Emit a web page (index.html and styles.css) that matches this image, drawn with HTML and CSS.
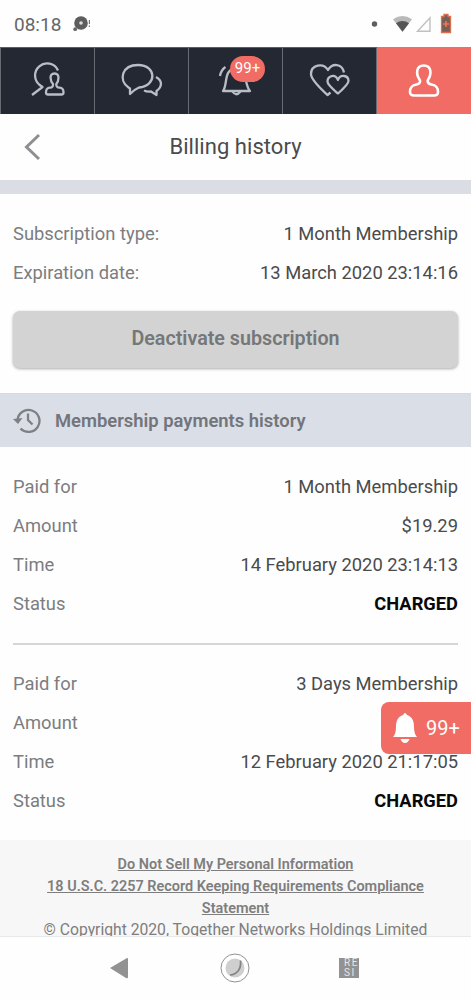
FILE: index.html
```html
<!DOCTYPE html>
<html lang="en">
<head>
<meta charset="utf-8">
<title>Billing history</title>
<link rel="stylesheet" href="styles.css">
</head>
<body>
<div class="screen">
  <header class="status">
    <span class="clock">08:18</span>
    <svg class="status-app" width="18" height="16" viewBox="0 0 18 16"><circle cx="8" cy="7" r="6.8" fill="#5d5d5d"/><circle cx="8" cy="7" r="1.800" fill="#ddd"/><circle cx="2.200" cy="13.200" r="1.900" fill="#666"/><path d="M16.400 4v4M16.400 9.500v1.500" stroke="#777" stroke-width="1.200"/></svg>
    <div class="status-right">
      <svg width="94" height="22" viewBox="0 0 94 22"><circle cx="4.500" cy="11" r="2.700" fill="#5d5d5d"/><path d="M23 6.200Q32.500-.300 42 6.200L32.500 18.800Z" fill="#b9b9b9"/><path d="M26 10.200Q32.500 6 39 10.200L32.500 18.800Z" fill="#555"/><path d="M47.500 18.200H60V4.800Z" fill="none" stroke="#c0c0c0" stroke-width="1.400"/><path d="M71.500 3.500h2.500V1.500h4v2h2.500v16H71.500Z" fill="#746058" stroke="#e06d50" stroke-width="1.300"/><path d="M76 8v6M73 11h6" stroke="#f17552" stroke-width="1.700"/></svg>
    </div>
  </header>
  <nav class="tabs">
    <a class="tab"><svg width="36" height="34" viewBox="0 0 36 34"><path d="M28 7.500A12 12 0 1 0 10.500 22.500M9 21.500L12.500 24L2 32"/><path d="M23 21C20.500 18.500 18.500 10.500 24.500 10.500S28.500 18.500 26.300 21C26 23.500 27.500 24.500 29.500 24.700C32.500 25 33.500 26 33.500 29.500Q33.500 31.500 31.500 31.500H18Q16 31.500 16 29.500C16 26 17 25 20 24.700C22 24.500 23.300 23.500 23 21Z"/></svg></a>
    <a class="tab"><svg width="42" height="34" viewBox="0 0 42 34"><path d="M7.500 24.500C-3 17 1 2 17 2C36 2 36 23 18 24.500C15.500 25.500 13 27 9 31V25.500Z"/><path d="M35 14C42 18 41 24 35.500 28V32L30 28.500C27 29 25 28.500 23 27.500"/></svg></a>
    <a class="tab"><svg width="38" height="36" viewBox="0 0 38 36"><path d="M8.500 5Q4 8 3 14"/><path d="M6 29C11 23 6 7 19 6.500C31 7 27 23 33 29Z"/><path d="M15.500 29.500Q19 35 23.500 29.500"/></svg><span class="badge">99+</span></a>
    <a class="tab"><svg width="42" height="34" viewBox="0 0 42 34"><path d="M35 9.500C33 0 23 0 19 7C14-1 2 2 2 11C2 17 12 26 18.500 32L21.500 29.500"/><path d="M29 17C26 10 18.500 13 18.500 18.500C18.500 22 25 27 29 30.500C34 26 39.500 21 39.500 18C39.500 12 31 11 29 17Z"/></svg></a>
    <a class="tab active"><svg width="36" height="36" viewBox="0 0 36 36"><path d="M14 18.500C9.500 12 10 3.500 17.800 3.500S26 12 21.700 18.500C21.500 21 23 22 25.500 22.500C31 23.500 32 26 32 30Q32 33.500 28 33.500H8Q4 33.500 4 30C4 26 5 23.500 10.500 22.500C13 22 14.500 21 14 18.500Z"/></svg></a>
  </nav>
  <div class="title-bar">
    <svg width="20" height="30" viewBox="0 0 20 30"><path d="M17 3L4.500 15L17 27"/></svg>
    <h1>Billing history</h1>
  </div>
  <div class="divider-band"></div>
  <main>
    <section class="rows subscription">
      <div class="row"><span>Subscription type:</span><b>1 Month Membership</b></div>
      <div class="row"><span>Expiration date:</span><b>13 March 2020 23:14:16</b></div>
    </section>
    <button class="deactivate">Deactivate subscription</button>
    <h2><svg width="28" height="28" viewBox="0 0 28 28"><path d="M4.500 13A11 11 0 1 1 7.500 21.500"/><path class="arrow" d="M0 12L9.500 11L5 17Z"/><path d="M15 6.500V13L19.500 17.500"/></svg><span>Membership payments history</span></h2>
    <section class="rows payment">
      <div class="row"><span>Paid for</span><b>1 Month Membership</b></div>
      <div class="row"><span>Amount</span><b>$19.29</b></div>
      <div class="row"><span>Time</span><b>14 February 2020 23:14:13</b></div>
      <div class="row"><span>Status</span><b class="charged">CHARGED</b></div>
    </section>
    <section class="rows payment second">
      <div class="row"><span>Paid for</span><b>3 Days Membership</b></div>
      <div class="row"><span>Amount</span></div>
      <div class="row"><span>Time</span><b>12 February 2020 21:17:05</b></div>
      <div class="row"><span>Status</span><b class="charged">CHARGED</b></div>
    </section>
    <div class="alert"><svg width="26" height="32" viewBox="0 0 26 32"><path d="M1 25Q4 22 4 15C4 8 6 5 11 3Q13-1 15 3C20 5 22 8 22 15Q22 22 25 25ZM8.500 27H17.500Q16 31 13 31T8.500 27Z"/></svg><span>99+</span></div>
  </main>
  <footer>
    <a>Do Not Sell My Personal Information</a>
    <a>18 U.S.C. 2257 Record Keeping Requirements Compliance Statement</a>
    <p>© Copyright 2020, Together Networks Holdings Limited</p>
  </footer>
  <div class="system-nav">
    <svg width="20" height="22" viewBox="0 0 20 22"><path d="M1 11L18 1Q19 .5 19 2V20Q19 22 17 21Z" fill="#929292"/></svg>
    <svg class="home" width="30" height="30" viewBox="0 0 30 30"><circle cx="15" cy="15" r="14" fill="#fff" stroke="#929292"/><circle cx="15" cy="15" r="9.500" fill="#cfcfcf"/><path d="M20.500 7.500C21.500 16 17 21.500 10 22" fill="none" stroke="#858585" stroke-width="1.700"/></svg>
    <div class="recent"><span>RE</span><span>SI</span></div>
  </div>
</div>
</body>
</html>
```
FILE: styles.css
```css
* { box-sizing: border-box; }
body { margin: 0; font-family: Roboto, sans-serif; color: #4a4b4c; background: #fefefe; }
h1, h2, p { margin: 0; }
.screen { width: 471px; height: 1000px; overflow: hidden; display: flex; flex-direction: column; }
.status { height: 47px; flex: none; display: flex; align-items: center; padding: 0 14px; }
.clock { font-size: 19px; color: #666; width: 59px; padding-top: 2px; }
.status-right { margin-left: auto; height: 22px; }
.status-right svg { display: block; margin-right: -7px; }
.tabs { height: 67px; flex: none; display: grid; grid-template-columns: 95px 94px 94px 94px 94px; background: #242832; }
.tab { position: relative; display: flex; align-items: center; justify-content: center; border-right: 1px solid #686b72; border-top: 1px solid #5a5d63; padding-bottom: 2px; }
.tab svg { fill: none; stroke: #b9bdc6; stroke-width: 2.3; stroke-linejoin: round; overflow: visible; }
.tab:first-child { border-left: 1px solid #686b72; }
.tab.active { background: #f16c65; border: 0; }
.tab.active svg { stroke: #fff; stroke-width: 2.6; }
.badge { position: absolute; left: 41px; top: 8px; width: 35px; height: 26px; border-radius: 13px; background: #f16c65; color: #fff; font-size: 15px; line-height: 25px; text-align: center; }
.title-bar { height: 66px; flex: none; display: grid; grid-template-columns: 20px 1fr 20px; align-items: center; padding: 0 22px; }
.title-bar svg { fill: none; stroke: #8d8f93; stroke-width: 3; }
h1 { text-align: center; font-size: 22px; font-weight: 400; padding-bottom: 2px; letter-spacing: .05px; }
.divider-band { height: 14px; flex: none; background: #dadde4; }
main { position: relative; flex: none; height: 646px; }
.rows { padding: 0 13px; font-size: 18.35px; }
.row { height: 39px; display: flex; align-items: center; justify-content: space-between; }
.row span { color: #7b7d7f; }
.row b { font-weight: 400; }
.row .charged { color: #090909; font-weight: 700; font-size: 18.3px; }
.subscription { padding-top: 20px; }
.deactivate { display: block; width: 445px; height: 57px; margin: 19px 13px 25px; padding: 0 0 3px; background: #d3d3d3; color: #757779; border: 0; border-radius: 7px; box-shadow: 0 1px 3px #aaa; font: 600 19.7px Roboto, sans-serif; }
h2 { height: 54px; display: flex; align-items: center; padding: 0 13px; gap: 14px; background: #dadee6; color: #72757c; font-size: 18.4px; font-weight: 600; border-top: 1px solid #d7dadd; }
h2 svg { fill: none; stroke: #7d8085; stroke-width: 2.3; }
h2 .arrow { fill: #7d8085; stroke: none; }
.payment { padding-top: 20px; }
.payment.second { margin: 20px 13px 0; padding: 19px 0 0; border-top: 2px solid #d4d5d6; }
.alert { position: absolute; left: 381px; top: 508px; width: 90px; height: 52px; border-radius: 8px 0 0 8px; background: #f16c65; color: #fff; display: flex; align-items: center; padding-left: 11px; gap: 8px; font-size: 20px; }
.alert svg { fill: #fff; }
footer { height: 97px; flex: none; overflow: hidden; background: #f7f7f7; border-bottom: 1px solid #e9e9e9; color: #7e7e7e; padding: 14px 40px 0; text-align: center; font-size: 14.45px; line-height: 22px; }
footer a { display: block; font-weight: 600; text-decoration: underline; }
footer p { font-size: 15.7px; white-space: nowrap; margin-top: -1px; }
.system-nav { height: 63px; flex: none; display: flex; align-items: center; justify-content: space-between; padding: 0 112px 2px 109px; }
.home { margin-left: 2px; }
.recent { width: 20px; height: 20px; overflow: hidden; background: #929292; color: #e6e6e6; font-size: 10px; line-height: 10px; letter-spacing: 1.5px; padding-left: 5px; display: flex; flex-direction: column; }
```
